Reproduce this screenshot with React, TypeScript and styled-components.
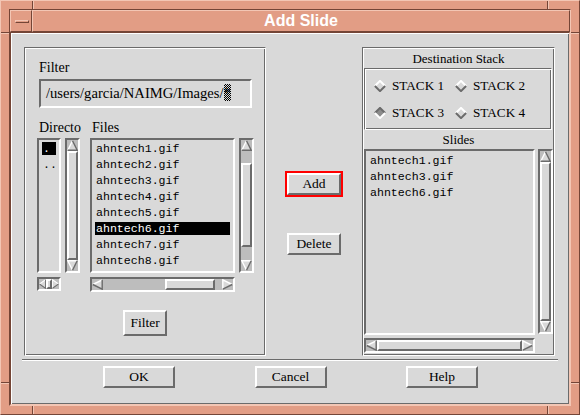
import React from "react";
import styled, { createGlobalStyle, css } from "styled-components";

const BG = "#d9d9d9";
const LT = "#ffffff";
const DK = "#6b6b6b";
const TR = "#bdbdbd";
const SAL = "#e29d85";
const SAL_LT = "#f3c6b4";
const SAL_DK = "#744536";

const Global = createGlobalStyle`
  html, body { margin: 0; padding: 0; }
  body { background: #ffffff; font-family: "Liberation Serif", "Times New Roman", serif; }
`;

const etched = css`
  border: 1px solid;
  border-color: ${DK} ${LT} ${LT} ${DK};
  box-shadow: inset 1px 1px 0 ${LT}, inset -1px -1px 0 ${DK};
`;

const sunken = css`
  border: 2px solid;
  border-color: ${DK} ${LT} ${LT} ${DK};
`;

const raised = css`
  border: 2px solid;
  border-color: ${LT} ${DK} ${DK} ${LT};
`;

const Window = styled.div`
  position: relative;
  box-sizing: border-box;
  width: 580px;
  height: 415px;
  background: ${SAL};
  border: 1px solid;
  border-color: ${SAL_LT} ${SAL_DK} ${SAL_DK} ${SAL_LT};
  padding: 8px;
  display: flex;
`;

const Frame = styled.div`
  flex: 1;
  display: flex;
  flex-direction: column;
  border: 1px solid;
  border-color: ${SAL_DK} ${SAL_LT} ${SAL_LT} ${SAL_DK};
`;

const Mark = styled.div<{ $v?: boolean; $x: number; $y: number }>`
  position: absolute;
  box-sizing: border-box;
  left: ${(p) => p.$x}px;
  top: ${(p) => p.$y}px;
  ${(p) =>
    p.$v
      ? css`
          width: 2px;
          height: 8px;
          border-left: 1px solid ${SAL_DK};
          border-right: 1px solid ${SAL_LT};
        `
      : css`
          width: 8px;
          height: 2px;
          border-top: 1px solid ${SAL_DK};
          border-bottom: 1px solid ${SAL_LT};
        `}
`;

const TitleBar = styled.div`
  height: 22px;
  display: flex;
  flex: none;
`;

const salRaised = css`
  box-sizing: border-box;
  border: 1px solid;
  border-color: ${SAL_LT} ${SAL_DK} ${SAL_DK} ${SAL_LT};
`;

const MenuButton = styled.div`
  ${salRaised};
  width: 22px;
  display: flex;
  align-items: center;
  justify-content: center;
`;

const MenuGlyph = styled.div`
  ${salRaised};
  width: 14px;
  height: 3px;
  margin-left: 1px;
`;

const TitleText = styled.div`
  ${salRaised};
  flex: 1;
  text-align: center;
  font-family: "Liberation Sans", Arial, sans-serif;
  font-weight: bold;
  font-size: 16px;
  line-height: 20px;
  color: #ffffff;
`;

const Body = styled.div`
  flex: 1;
  background: ${BG};
  border: 1px solid;
  border-color: ${SAL_DK} ${SAL_LT} ${SAL_LT} ${SAL_DK};
  box-shadow: inset 1px 1px 0 ${LT}, inset -1px -1px 0 ${DK};
  padding: 14px 14px 0 13px;
  display: flex;
  flex-direction: column;
`;

const MainRow = styled.div`
  display: flex;
  height: 309px;
`;

const LeftGroup = styled.div`
  ${etched};
  box-sizing: border-box;
  width: 242px;
  display: flex;
  flex-direction: column;
  padding: 12px 0 0 12px;
`;

const Label = styled.div<{ $size?: number }>`
  font-size: ${(p) => p.$size ?? 14}px;
  line-height: 16px;
  height: 16px;
  color: #000;
  white-space: nowrap;
`;

const FilterLabel = styled(Label)`
  margin-left: 2px;
`;

const TextField = styled.div`
  ${sunken};
  box-sizing: border-box;
  width: 213px;
  height: 29px;
  margin: 3px 0 0 2px;
  padding-left: 5px;
  font-size: 14.6px;
  line-height: 25px;
  white-space: nowrap;
  overflow: hidden;
  color: #000;
`;

const CursorWrap = styled.span`
  position: relative;
`;

const Stipple = styled.span`
  position: absolute;
  left: 0px;
  top: -1px;
  width: 7px;
  height: 17px;
  background: repeating-conic-gradient(#000 0% 25%, transparent 0% 50%) 0 0 / 2px 2px;
`;

const LabelsRow = styled.div`
  display: flex;
  margin: 12px 0 0 2px;
`;

const DirLabel = styled(Label)`
  width: 53px;
`;

const ListsRow = styled.div`
  display: flex;
  margin-top: 2px;
  height: 135px;
`;

const HRow = styled.div`
  display: flex;
  margin-top: 4px;
  height: 15px;
`;

const Spacer = styled.div<{ $w: number }>`
  flex: none;
  width: ${(p) => p.$w}px;
`;

const ListBox = styled.div<{ $w: number; $h?: number; $padTop?: number }>`
  ${sunken};
  box-sizing: border-box;
  flex: none;
  width: ${(p) => p.$w}px;
  height: ${(p) => (p.$h ? `${p.$h}px` : "100%")};
  background: ${BG};
  padding: ${(p) => p.$padTop ?? 2}px 3px 0 3px;
  overflow: hidden;
  font-family: "Liberation Mono", "Courier New", monospace;
  font-size: 11.6px;
`;

const Item = styled.div<{ $sel?: boolean }>`
  height: 13px;
  line-height: 13px;
  margin-bottom: 3px;
  padding-left: 1px;
  white-space: nowrap;
  overflow: hidden;
  background: ${(p) => (p.$sel ? "#000" : "transparent")};
  color: ${(p) => (p.$sel ? "#fff" : "#000")};
`;

/* ---------- scrollbars ---------- */

const SBar = styled.div<{ $vertical?: boolean; $w: number; $h: number }>`
  ${sunken};
  box-sizing: border-box;
  flex: none;
  width: ${(p) => p.$w}px;
  height: ${(p) => p.$h}px;
  display: flex;
  flex-direction: ${(p) => (p.$vertical ? "column" : "row")};
  background: ${TR};
`;

const ArrowBox = styled.div<{ $vertical?: boolean; $len: number }>`
  flex: none;
  display: flex;
  ${(p) =>
    p.$vertical
      ? css`
          height: ${p.$len}px;
          width: 100%;
        `
      : css`
          width: ${p.$len}px;
          height: 100%;
        `}
  svg {
    width: 100%;
    height: 100%;
    display: block;
  }
`;

const Trough = styled.div<{ $vertical?: boolean }>`
  flex: 1;
  min-width: 0;
  min-height: 0;
  display: flex;
  flex-direction: ${(p) => (p.$vertical ? "column" : "row")};
`;

const Gap = styled.div<{ $grow: number }>`
  flex: ${(p) => p.$grow} 1 0;
  min-width: 0;
  min-height: 0;
`;

const Thumb = styled.div<{ $grow: number }>`
  ${raised};
  box-sizing: border-box;
  flex: ${(p) => p.$grow} 1 0;
  background: ${BG};
  min-width: 4px;
  min-height: 4px;
`;

type Dir = "up" | "down" | "left" | "right";
const arrowPts: Record<Dir, { fill: string; light: string; dark: string }> = {
  up: { fill: "5.5,0.8 10.2,10.2 0.8,10.2", light: "0.8,10.2 5.5,0.8", dark: "5.5,0.8 10.2,10.2 0.8,10.2" },
  down: { fill: "0.8,0.8 10.2,0.8 5.5,10.2", light: "5.5,10.2 0.8,0.8 10.2,0.8", dark: "10.2,0.8 5.5,10.2" },
  left: { fill: "0.8,5.5 10.2,0.8 10.2,10.2", light: "0.8,5.5 10.2,0.8", dark: "10.2,0.8 10.2,10.2 0.8,5.5" },
  right: { fill: "0.8,0.8 10.2,5.5 0.8,10.2", light: "0.8,10.2 0.8,0.8 10.2,5.5", dark: "10.2,5.5 0.8,10.2" },
};

const Arrow: React.FC<{ dir: Dir }> = ({ dir }) => {
  const p = arrowPts[dir];
  return (
    <svg viewBox="0 0 11 11" preserveAspectRatio="none">
      <polygon points={p.fill} fill={BG} />
      <polyline points={p.light} fill="none" stroke={LT} strokeWidth={1.4} />
      <polyline points={p.dark} fill="none" stroke={DK} strokeWidth={1.4} />
    </svg>
  );
};

const ScrollBar: React.FC<{
  vertical?: boolean;
  w: number;
  h: number;
  before?: number;
  size?: number;
  after?: number;
  arrow?: number;
}> = ({ vertical, w, h, before = 0, size = 1, after = 0, arrow = 11 }) => (
  <SBar $vertical={vertical} $w={w} $h={h}>
    <ArrowBox $vertical={vertical} $len={arrow}>
      <Arrow dir={vertical ? "up" : "left"} />
    </ArrowBox>
    <Trough $vertical={vertical}>
      <Gap $grow={before} />
      <Thumb $grow={size} />
      <Gap $grow={after} />
    </Trough>
    <ArrowBox $vertical={vertical} $len={arrow}>
      <Arrow dir={vertical ? "down" : "right"} />
    </ArrowBox>
  </SBar>
);

/* ---------- buttons ---------- */

const PushButton = styled.button<{ $w: number; $h: number }>`
  ${raised};
  box-sizing: border-box;
  width: ${(p) => p.$w}px;
  height: ${(p) => p.$h}px;
  margin: 0;
  padding: 0;
  background: ${BG};
  font-family: "Liberation Serif", "Times New Roman", serif;
  font-weight: normal;
  font-size: 13.5px;
  color: #000;
  display: flex;
  align-items: center;
  justify-content: center;
  flex: none;
`;

const Focus = styled.div<{ $on?: boolean }>`
  display: flex;
  border: 2px solid ${(p) => (p.$on ? "#ff0000" : "transparent")};
`;

const FilterButtonWrap = styled.div`
  margin-top: 18px;
  margin-left: 86px;
`;

const Middle = styled.div`
  width: 96px;
  flex: none;
  display: flex;
  flex-direction: column;
  align-items: center;
  padding-top: 124px;
  box-sizing: border-box;
`;

const DeleteWrap = styled.div`
  margin-top: 34px;
`;

/* ---------- right group ---------- */

const RightGroup = styled.div`
  ${etched};
  box-sizing: border-box;
  width: 193px;
  display: flex;
  flex-direction: column;
  padding: 1px 1px 0 1px;
`;

const GroupTitle = styled.div`
  height: 19px;
  line-height: 17px;
  padding-top: 1px;
  box-sizing: border-box;
  text-align: center;
  font-size: 13px;
  color: #000;
`;

const RadioBox = styled.div`
  ${etched};
  box-sizing: border-box;
  width: 188px;
  height: 62px;
  display: grid;
  grid-template-columns: 81px 81px;
  grid-auto-rows: 27px;
  padding: 3px 0 0 9px;
`;

const RadioItem = styled.div`
  display: flex;
  align-items: center;
  gap: 6px;
  font-size: 13.2px;
  color: #000;
  white-space: nowrap;
  svg {
    flex: none;
    display: block;
  }
`;

const Diamond: React.FC<{ on?: boolean }> = ({ on }) => (
  <svg width="12" height="12" viewBox="0 0 12 12">
    <polygon points="6,0.7 11.3,6 6,11.3 0.7,6" fill={on ? "#8c8c8c" : BG} />
    <polyline points="0.9,6 6,0.9 11.1,6" fill="none" stroke={on ? DK : LT} strokeWidth={2} />
    <polyline points="0.9,6 6,11.1 11.1,6" fill="none" stroke={on ? LT : DK} strokeWidth={2} />
  </svg>
);

const SlidesArea = styled.div`
  display: grid;
  grid-template-columns: 171px 15px;
  grid-template-rows: 186px 15px;
  column-gap: 3px;
  row-gap: 3px;
`;

/* ---------- bottom ---------- */

const Separator = styled.div`
  height: 2px;
  margin: 3px -3px 0 -2px;
  border-top: 1px solid ${DK};
  border-bottom: 1px solid ${LT};
  box-sizing: border-box;
`;

const ButtonRow = styled.div`
  display: flex;
  gap: 79.5px;
  margin-top: 5px;
  padding-left: 79px;
`;

const files = [
  "ahntech1.gif",
  "ahntech2.gif",
  "ahntech3.gif",
  "ahntech4.gif",
  "ahntech5.gif",
  "ahntech6.gif",
  "ahntech7.gif",
  "ahntech8.gif",
];

const slides = ["ahntech1.gif", "ahntech3.gif", "ahntech6.gif"];

export default function App() {
  return (
    <>
      <Global />
      <Window>
        <Frame>
          <TitleBar>
            <MenuButton>
              <MenuGlyph />
            </MenuButton>
            <TitleText>Add Slide</TitleText>
          </TitleBar>
          <Body>
            <MainRow>
              <LeftGroup>
                <FilterLabel>Filter</FilterLabel>
                <TextField>
                  /users/garcia/NAIMG/Images/
                  <CursorWrap>
                    *<Stipple />
                  </CursorWrap>
                </TextField>
                <LabelsRow>
                  <DirLabel>Directo</DirLabel>
                  <Label>Files</Label>
                </LabelsRow>
                <ListsRow>
                  <ListBox $w={24}>
                    <Item $sel>.</Item>
                    <Item>..</Item>
                  </ListBox>
                  <Spacer $w={4} />
                  <ScrollBar vertical w={15} h={135} />
                  <Spacer $w={10} />
                  <ListBox $w={145}>
                    {files.map((f) => (
                      <Item key={f} $sel={f === "ahntech6.gif"}>
                        {f}
                      </Item>
                    ))}
                  </ListBox>
                  <Spacer $w={4} />
                  <ScrollBar vertical w={15} h={135} before={12} size={84} after={13} />
                </ListsRow>
                <HRow>
                  <ScrollBar w={24} h={14} arrow={7} />
                  <Spacer $w={29} />
                  <ScrollBar w={145} h={15} before={64} size={48} after={7} />
                </HRow>
                <FilterButtonWrap>
                  <PushButton $w={44} $h={26}>Filter</PushButton>
                </FilterButtonWrap>
              </LeftGroup>

              <Middle>
                <Focus $on>
                  <PushButton $w={54} $h={22}>Add</PushButton>
                </Focus>
                <DeleteWrap>
                  <Focus>
                    <PushButton $w={54} $h={22}>Delete</PushButton>
                  </Focus>
                </DeleteWrap>
              </Middle>

              <RightGroup>
                <GroupTitle>Destination Stack</GroupTitle>
                <RadioBox>
                  <RadioItem>
                    <Diamond />
                    STACK 1
                  </RadioItem>
                  <RadioItem>
                    <Diamond />
                    STACK 2
                  </RadioItem>
                  <RadioItem>
                    <Diamond on />
                    STACK 3
                  </RadioItem>
                  <RadioItem>
                    <Diamond />
                    STACK 4
                  </RadioItem>
                </RadioBox>
                <GroupTitle>Slides</GroupTitle>
                <SlidesArea>
                  <ListBox $w={171} $h={186} $padTop={3}>
                    {slides.map((s) => (
                      <Item key={s}>{s}</Item>
                    ))}
                  </ListBox>
                  <ScrollBar vertical w={15} h={185} />
                  <ScrollBar w={171} h={15} />
                </SlidesArea>
              </RightGroup>
            </MainRow>
            <Separator />
            <ButtonRow>
              <PushButton $w={72} $h={22}>OK</PushButton>
              <PushButton $w={72} $h={22}>Cancel</PushButton>
              <PushButton $w={72} $h={22}>Help</PushButton>
            </ButtonRow>
          </Body>
        </Frame>
        <Mark $v $x={31} $y={0} />
        <Mark $v $x={546} $y={0} />
        <Mark $v $x={31} $y={405} />
        <Mark $v $x={546} $y={405} />
        <Mark $x={0} $y={31} />
        <Mark $x={570} $y={31} />
        <Mark $x={0} $y={381} />
        <Mark $x={570} $y={381} />
      </Window>
    </>
  );
}
